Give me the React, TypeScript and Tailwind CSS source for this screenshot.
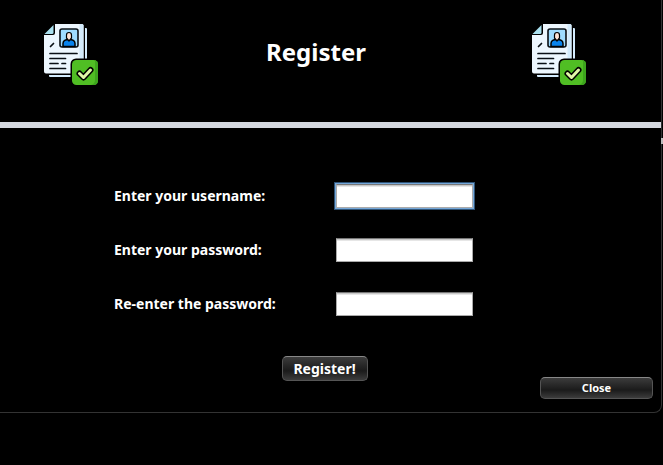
import React from 'react';

function DocumentIcon() {
  return (
    <svg viewBox="0 0 58 64" className="h-16 w-[58px]" aria-hidden="true">
      <path d="M43 5H44Q45 5 45 6V54H8Q7 54 7 53V52H43Z" fill="#d5edff" />
      <path d="M13 1H40Q41.500 1 41.500 2.500V50.500H4Q2 50.500 2 48.500V12H11Q13 12 13 10Z" fill="#edf7ff" />
      <path d="M37.500 1H40Q41.500 1 41.500 2.500V50.500H37.500Z" fill="#d3ebfc" />
      <path d="M11.500 2V9.500Q11.500 11 10 11H2.500Z" fill="#a9e0ef" />
      <rect x="18" y="6" width="18" height="18" rx="2" fill="#9fdcff" stroke="#0a1016" strokeWidth="1.600" />
      <path d="M21 23.500V20.500Q21 16.500 27 16.500T33 20.500V23.500Z" fill="#0883ed" stroke="#000" strokeWidth="1.500" />
      <path d="M24.500 12Q24.500 9.500 27 9.500T29.500 12V15L27 18L24.500 15Z" fill="#ffe3d5" stroke="#000" strokeWidth="1.200" />
      <path d="M8.500 23.500L11.500 20.500M8 30.500H35M8 35.500H23.500M8 40.500H16M20 40.500H23.500M8 45.500H23.500" fill="none" stroke="#0a1016" strokeWidth="1.700" strokeLinecap="round" />
      <rect x="28.500" y="35.500" width="28.500" height="28" rx="5.500" fill="#000" />
      <rect x="30" y="37" width="26" height="25" rx="4.500" fill="#50be24" />
      <path d="M51.500 37Q56 37 56 41.500V57.500Q56 62 51.500 62H49Q53 61 53 57V37.500Z" fill="#3da51d" />
      <path d="M37.500 50.500L41.500 54.500L48.500 47" fill="none" stroke="#000" strokeWidth="6" strokeLinecap="round" strokeLinejoin="round" />
      <path d="M37.500 50.500L41.500 54.500L48.500 47" fill="none" stroke="#e1f8a8" strokeWidth="3" strokeLinecap="round" strokeLinejoin="round" />
    </svg>
  );
}

const fields = [
  { id: 'username', label: 'Enter your username:', type: 'text', focused: true },
  { id: 'password', label: 'Enter your password:', type: 'password', focused: false },
  { id: 'repeat', label: 'Re-enter the password:', type: 'password', focused: false },
];

const buttonStyle =
  'flex items-center justify-center rounded-[5px] border border-[#555] border-t-[#888] bg-linear-to-b from-[#3c3c3c] via-[#1b1b1b] via-60% to-[#3c3c3c] font-bold text-white';

export default function App() {
  return (
    <div className="min-h-screen bg-black font-['Noto_Sans','Open_Sans',sans-serif] text-white">
      <main className="relative mr-px rounded-br-lg border-r border-b border-[#333]">
        <header className="flex h-32 items-start justify-between border-b-6 border-[#d5d8df] pt-[23px] pr-[73px] pl-[42px]">
          <DocumentIcon />
          <h1 className="mt-3 pl-0.5 text-2xl leading-[34px] font-bold">Register</h1>
          <DocumentIcon />
        </header>
        <form className="pt-14 pb-[13px]" onSubmit={(e) => e.preventDefault()}>
          <div className="flex flex-col gap-[30px] pl-[114px]">
            {fields.map((f) => (
              <div key={f.id} className="flex h-6 items-center">
                <label htmlFor={f.id} className="w-[222px] text-sm font-bold">
                  {f.label}
                </label>
                <input
                  id={f.id}
                  type={f.type}
                  className={
                    'h-6 w-[137px] border border-[#aaa] border-t-[#777] bg-white px-1 text-sm text-black shadow-[inset_0_1px_0_#c8c8c8,inset_0_2px_0_#e6e6e6] outline-none ' +
                    (f.focused ? 'ring-1 ring-[#75a7d8] outline-1 outline-offset-1 outline-[#2f5478] outline-solid' : '')
                  }
                />
              </div>
            ))}
          </div>
          <div className="mt-10 flex justify-center pr-3">
            <button type="submit" className={buttonStyle + ' h-[25px] w-[86px] text-sm'}>
              Register!
            </button>
          </div>
          <div className="-mt-1 flex justify-end pr-2">
            <button type="button" className={buttonStyle + ' h-[22px] w-[113px] text-[11px]'}>
              Close
            </button>
          </div>
        </form>
        <span className="absolute top-[138px] -right-0.5 h-1.5 w-0.5 bg-[#bbb]" />
      </main>
    </div>
  );
}
